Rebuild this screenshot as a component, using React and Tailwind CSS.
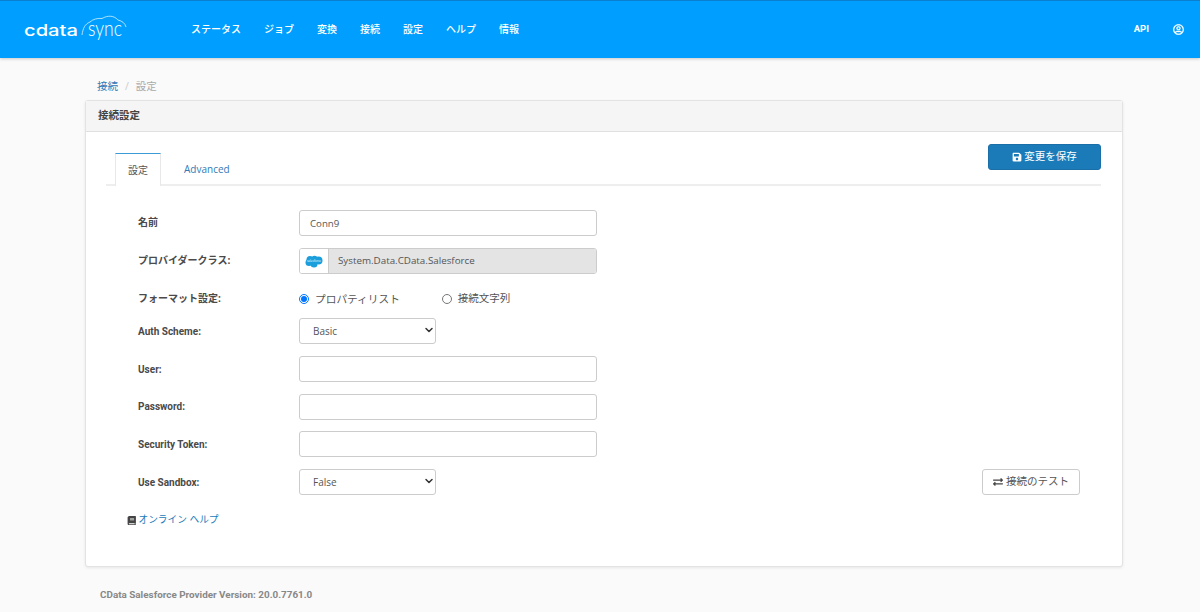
import { ChevronDown } from "lucide-react"
import { FaBook, FaExchangeAlt, FaRegUserCircle, FaSave } from "react-icons/fa"

const navItems = ["ステータス", "ジョブ", "変換", "接続", "設定", "ヘルプ", "情報"]

const Logo = () => {
  return (
    <svg width="106" height="32" viewBox="0 0 106 32" className="shrink-0">
      <text x="0" y="21.500" fill="#fff" fontFamily="Inter" fontSize="15.500" fontWeight="500" textLength="54" lengthAdjust="spacingAndGlyphs">
        cdata
      </text>
      <text x="64" y="22" fill="#fff" fontFamily="Lato" fontSize="21" fontWeight="300" textLength="34" lengthAdjust="spacingAndGlyphs">
        sync
      </text>
      <path
        d="M58 21 C59 14 61 10 66 8 C69 5 74 4 78 4.500 C84 1 90 1.500 94 6 C98 7 101 9 102 13"
        fill="none"
        stroke="#fff"
        strokeWidth="0.8"
        opacity="0.85"
      />
    </svg>
  )
}

const SalesforceLogo = () => {
  return (
    <svg width="18" height="13" viewBox="0 0 18 13">
      <g fill="#1b9fdc">
        <circle cx="5" cy="4.500" r="3.500" />
        <circle cx="9.500" cy="3.800" r="3" />
        <circle cx="13.500" cy="5.500" r="4" />
        <circle cx="9" cy="9" r="3.500" />
        <circle cx="4" cy="7.500" r="3.500" />
      </g>
      <text x="9" y="7.300" fill="#fff" fontFamily="Open Sans" fontSize="3" textAnchor="middle">
        salesforce
      </text>
    </svg>
  )
}

const Label = ({ children, latin }) => {
  return (
    <label
      className={
        latin
          ? "w-[161px] shrink-0 font-['Roboto'] text-[10px] font-bold text-[#4a4a4a]"
          : "w-[161px] shrink-0 pb-[2px] text-[10px] font-bold text-[#4a4a4a]"
      }
    >
      {children}
    </label>
  )
}

const TextInput = ({ value }) => {
  return (
    <input
      type="text"
      defaultValue={value}
      className="h-[26px] w-[298px] rounded-[3px] border border-[#ccc] bg-white px-[10px] text-[9.7px] text-[#555] outline-none"
    />
  )
}

const SelectInput = ({ value }) => {
  return (
    <div className="relative w-[137px]">
      <select
        defaultValue={value}
        className="block h-[26px] w-full appearance-none rounded-[3px] border border-[#ccc] bg-white pl-[13px] text-[10px] text-[#555] outline-none"
      >
        <option>{value}</option>
      </select>
      <ChevronDown size={12} strokeWidth={3} className="pointer-events-none absolute right-[1px] top-[6px] text-[#333]" />
    </div>
  )
}

export default function App() {
  return (
    <div className="flex h-[612px] flex-col overflow-hidden bg-[#fafafa] font-['Open_Sans','Noto_Sans_CJK_JP',sans-serif]">
      {/* Header */}
      <header className="flex h-[58px] shrink-0 items-center border-t border-[#0a7fd0] bg-[#009fff] pl-6 pr-[15px] text-white shadow-[0_1px_3px_rgba(0,0,0,0.2)]">
        <Logo />
        <nav className="ml-[61px] flex gap-[23px] text-[10px] font-medium">
          {navItems.map((item) => (
            <a key={item}>{item}</a>
          ))}
        </nav>
        <a className="ml-auto font-['Roboto'] text-[9.5px] font-bold">API</a>
        <FaRegUserCircle size={11} className="ml-[24px] mr-[1px] stroke-current stroke-[12]" />
      </header>

      <main className="ml-[85px] w-[1038px]">
        {/* Breadcrumb */}
        <div className="flex h-[42px] items-end gap-[7px] pb-[5px] pl-[12px] text-[10.5px] text-[#aaa]">
          <a className="text-[#337ab7]">接続</a>
          <span className="text-[#ccc]">/</span>
          <span>設定</span>
        </div>

        {/* Card */}
        <section className="h-[467px] rounded-[3px] border border-[#e3e3e3] bg-white shadow-[0_1px_3px_rgba(0,0,0,0.08)]">
          <div className="flex h-[31px] items-center border-b border-[#e0e0e0] bg-[#f5f5f5] pl-[12px] text-[10.5px] font-semibold text-[#444]">
            接続設定
          </div>

          <div className="pl-[20px] pr-[21px]">
            {/* Tabs */}
            <div className="relative flex h-[54px] items-end border-b-2 border-[#eee]">
              <div className="relative top-[2px] ml-[9px] flex h-[33px] w-[46px] items-center justify-center border-x border-t border-x-[#e8e8e8] border-t-[#3c9ad6] bg-white text-[10px] text-[#555]">
                設定
              </div>
              <a className="mb-[7px] ml-[23px] text-[10px] text-[#337ab7]">Advanced</a>
              <button className="absolute right-0 top-[12px] flex h-[26px] w-[113px] items-center justify-center gap-[2px] rounded-[3px] border border-[#1a6fa8] bg-[#1b7bb9] text-[10.5px] text-white">
                <FaSave size={10} />
                変更を保存
              </button>
            </div>

            {/* Form */}
            <form className="flex flex-col pl-[32px] pr-[21px] pt-[24px]">
              <div className="flex items-center">
                <Label>名前</Label>
                <TextInput value="Conn9" />
              </div>

              <div className="mt-[12px] flex items-center">
                <Label>プロバイダークラス:</Label>
                <div className="flex h-[26px] w-[298px] overflow-hidden rounded-[3px] border border-[#ccc]">
                  <div className="flex w-[28px] items-center justify-center bg-white">
                    <SalesforceLogo />
                  </div>
                  <div className="flex flex-1 items-center border-l border-[#ccc] bg-[#e4e4e4] pl-[9px] text-[9.8px] text-[#555]">
                    System.Data.CData.Salesforce
                  </div>
                </div>
              </div>

              <div className="mt-[15px] flex h-[20px] items-center">
                <Label>フォーマット設定:</Label>
                <label className="flex items-center gap-[6px] text-[10.7px] text-[#555]">
                  <input type="radio" name="format" defaultChecked className="m-0 size-[10px] accent-[#0075ff]" />
                  プロパティリスト
                </label>
                <label className="ml-[42px] flex items-center gap-[6px] text-[10.5px] text-[#555]">
                  <input type="radio" name="format" className="m-0 size-[10px]" />
                  接続文字列
                </label>
              </div>

              <div className="mt-[9px] flex items-center">
                <Label latin>Auth Scheme:</Label>
                <SelectInput value="Basic" />
              </div>

              <div className="mt-[12px] flex items-center">
                <Label latin>User:</Label>
                <TextInput />
              </div>

              <div className="mt-[11.5px] flex items-center">
                <Label latin>Password:</Label>
                <TextInput />
              </div>

              <div className="mt-[11.5px] flex items-center">
                <Label latin>Security Token:</Label>
                <TextInput />
              </div>

              <div className="mt-[12px] flex items-center">
                <Label latin>Use Sandbox:</Label>
                <SelectInput value="False" />
                <button type="button" className="ml-auto flex h-[26px] w-[98px] items-center justify-center gap-[3px] rounded-[3px] border border-[#ccc] bg-white text-[10.5px] text-[#555]">
                  <FaExchangeAlt size={10} className="text-[#444]" />
                  接続のテスト
                </button>
              </div>
            </form>

            <a className="mt-[18px] ml-[21px] flex items-center gap-[2px] text-[9.7px] text-[#1b7bb9]">
              <FaBook size={9.500} className="text-[#444]" />
              オンライン ヘルプ
            </a>
          </div>
        </section>

        <div className="mt-[21px] pl-[15px] font-['Roboto'] text-[9.9px] font-bold text-[#888]">
          CData Salesforce Provider Version: 20.0.7761.0
        </div>
      </main>
    </div>
  )
}
